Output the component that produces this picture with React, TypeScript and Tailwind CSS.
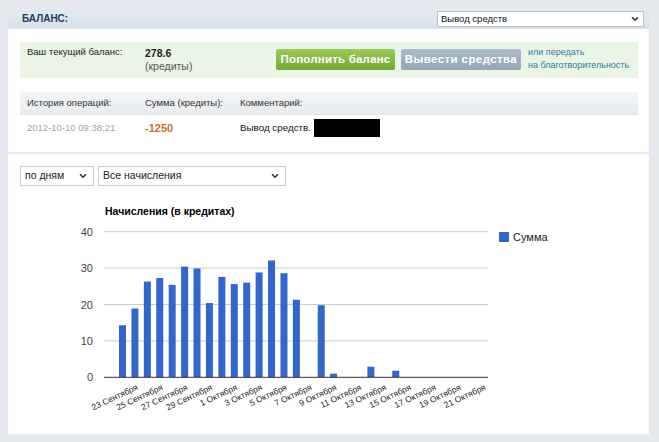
import React from "react";

const font = { fontFamily: '"Liberation Sans", Arial, sans-serif' };

const values = [
  14.3, 18.9, 26.3, 27.3, 25.4, 30.4, 29.9, 20.4, 27.6, 25.6, 26.0, 28.8, 32.1, 28.6, 21.3,
  0, 19.8, 1.0, 0, 0, 2.9, 0, 1.8, 0, 0, 0, 0, 0, 0, 0,
];

const labels = [
  "23 Сентября",
  "25 Сентября",
  "27 Сентября",
  "29 Сентября",
  "1 Октября",
  "3 Октября",
  "5 Октября",
  "7 Октября",
  "9 Октября",
  "11 Октября",
  "13 Октября",
  "15 Октября",
  "17 Октября",
  "19 Октября",
  "21 Октября",
];

function Chevron() {
  return (
    <svg width="8" height="6" viewBox="0 0 8 6">
      <path d="M1 1.2 L4 4.2 L7 1.2" stroke="#333" strokeWidth="1.6" fill="none" />
    </svg>
  );
}

function Chart() {
  // SVG coordinates: page x - 8, page y - 194
  const ox = 8;
  const oy = 194;
  const base = 377.3 - oy;
  const unit = 3.64;
  const left = 104 - ox;
  const right = 488 - ox;
  const grid = [40, 30, 20, 10];
  return (
    <svg width="641" height="240" viewBox="0 0 641 240" style={font}>
      <text x={105 - ox} y={215 - oy} fontSize="10.5" fontWeight="bold" fill="#000">
        Начисления (в кредитах)
      </text>
      {grid.map((g) => (
        <line
          key={g}
          x1={left}
          x2={right}
          y1={base - g * unit}
          y2={base - g * unit}
          stroke="#cccccc"
          strokeWidth="1"
        />
      ))}
      {[40, 30, 20, 10, 0].map((g) => (
        <text
          key={g}
          x={93 - ox}
          y={base - g * unit + 4}
          fontSize="11"
          fill="#444"
          textAnchor="end"
        >
          {g}
        </text>
      ))}
      {values.map((v, i) => {
        const cx = 122.5 + i * 12.42 - ox;
        const h = v * unit;
        if (h <= 0) return null;
        return <rect key={i} x={cx - 3.5} y={base - h} width="7" height={h} fill="#3366cc" />;
      })}
      <line x1={left} x2={right} y1={base} y2={base} stroke="#333" strokeWidth="1" />
      {labels.map((l, k) => {
        const cx = 122.5 + k * 2 * 12.42 - ox + 16;
        const y = base + 12;
        return (
          <text
            key={l}
            x={cx}
            y={y}
            fontSize="8.5"
            fill="#222"
            textAnchor="end"
            transform={`rotate(-25 ${cx} ${y})`}
          >
            {l}
          </text>
        );
      })}
      <rect x={499 - ox} y={232 - oy} width="10" height="10" fill="#3366cc" />
      <text x={513 - ox} y={241 - oy} fontSize="11" fill="#222">
        Сумма
      </text>
    </svg>
  );
}

export default function App() {
  return (
    <div className="w-[659px] h-[442px] bg-[#e6eaee] pt-[8px] pl-[8px] overflow-hidden" style={font}>
      <div className="w-[641px] flex flex-col">
        {/* Top panel */}
        <div className="bg-white flex flex-col h-[144px]">
          <div className="h-[21px] bg-gradient-to-b from-[#e3eaf1] to-[#d8e2ec] flex items-center justify-between pl-[14px] pr-[5px]">
            <span className="text-[10px] font-bold text-[#1d3d5c]">БАЛАНС:</span>
            <div className="w-[207px] h-[16px] bg-white border border-[#b9c2cb] flex items-center justify-between pl-[3px] pr-[4px]">
              <span className="text-[9.5px] text-[#111] leading-none">Вывод средств</span>
              <Chevron />
            </div>
          </div>
          <div className="pl-[12px] pr-[11px] pt-[13px] flex flex-col">
            <div className="h-[36px] bg-[#ebf5e5] flex items-start">
              <div className="w-[125px] pl-[7px] pt-[3px] text-[9.5px] leading-[13px] text-[#222]">Ваш текущий баланс:</div>
              <div className="w-[131px] pt-[5px] flex flex-col leading-[13px]">
                <span className="text-[10.5px] font-bold text-[#222]">278.6</span>
                <span className="text-[10.5px] text-[#555]">(кредиты)</span>
              </div>
              <div className="pt-[7px] flex gap-[6px]">
                <div className="w-[119px] h-[21px] rounded-[2px] bg-gradient-to-b from-[#9ccb58] to-[#72a834] flex items-center justify-center text-white text-[11.5px] font-bold tracking-[0.2px]">
                  Пополнить баланс
                </div>
                <div className="w-[120px] h-[21px] rounded-[2px] bg-gradient-to-b from-[#acbccc] to-[#93a5b8] flex items-center justify-center text-white text-[11.5px] font-bold tracking-[0.4px]">
                  Вывести средства
                </div>
              </div>
              <div className="pl-[7px] pt-[4px] flex flex-col text-[9px] leading-[13px] text-[#2f7aa3]">
                <span>или передать</span>
                <span>на благотворительность</span>
              </div>
            </div>
            <div className="mt-[14px] h-[23px] bg-gradient-to-b from-[#f2f4f6] to-[#e9ecef] border-b border-[#e2e5e8] flex items-center text-[9.5px] text-[#333]">
              <span className="w-[125px] pl-[7px]">История операций:</span>
              <span className="w-[95px]">Сумма (кредиты):</span>
              <span>Комментарий:</span>
            </div>
            <div className="h-[26px] flex items-center">
              <span className="w-[125px] pl-[7px] text-[9.5px] text-[#a4a4a4]">2012-10-10 09:38:21</span>
              <span className="w-[95px] text-[11px] font-bold text-[#c7722b]">-1250</span>
              <span className="text-[9.8px] text-[#111]">Вывод средств.</span>
              <span className="ml-[3px] w-[66px] h-[18px] bg-black" />
            </div>
          </div>
        </div>
        {/* Bottom panel */}
        <div className="mt-[2px] bg-white h-[280px] flex flex-col">
          <div className="pl-[12px] pt-[12px] flex gap-[4px]">
            <div className="w-[74px] h-[20px] border border-[#c9ced3] bg-white flex items-center justify-between pl-[4px] pr-[6px]">
              <span className="text-[10.5px] text-[#222]">по дням</span>
              <Chevron />
            </div>
            <div className="w-[188px] h-[20px] border border-[#c9ced3] bg-white flex items-center justify-between pl-[4px] pr-[6px]">
              <span className="text-[10.5px] text-[#222]">Все начисления</span>
              <Chevron />
            </div>
          </div>
          <div className="mt-[8px]">
            <Chart />
          </div>
        </div>
      </div>
    </div>
  );
}
